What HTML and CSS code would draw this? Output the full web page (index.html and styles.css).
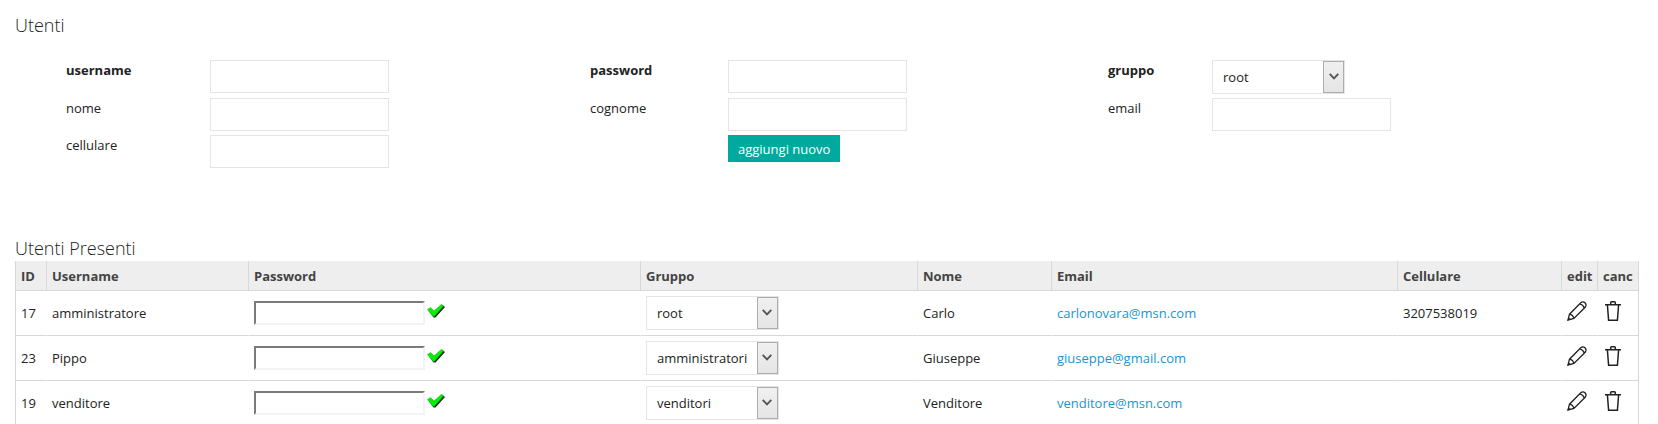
FILE: index.html
```html
<!DOCTYPE html>
<html lang="it">
<head>
<meta charset="utf-8">
<title>Utenti</title>
<link rel="stylesheet" href="styles.css">
</head>
<body>
<svg class="sprite" aria-hidden="true">
  <symbol id="pencil" viewBox="0 0 20 20">
    <path d="M1 19 L2.500 13.200 L14 1.600 Q16 .2 18 1.800 Q19.800 3.800 18.400 6 L6.900 17.400 Z M2.500 13.200 Q6 13.800 6.900 17.400 M12.800 2.800 Q16.400 3.600 17.200 7.200" fill="none" stroke="#222" stroke-width="1.300"/>
    <path d="M.5 19.500 L1.500 16.200 L3.900 18.500 Z" fill="#222"/>
  </symbol>
  <symbol id="trash" viewBox="0 0 16 20">
    <path d="M0 3.700 H16 M5.700 3.700 V1.600 Q5.700 .8 6.500 .8 H9.500 Q10.300 .8 10.300 1.600 V3.700 M2.400 4 L3.600 19.200 H12.400 L13.600 4" fill="none" stroke="#222" stroke-width="1.500"/>
  </symbol>
  <symbol id="check" viewBox="0 0 18 15">
    <path d="M2 7 L5 5.500 L8 8.500 L15.500 1 L18 3 L8.500 13.500 L6.500 13.500 Z" fill="#222"/>
    <path d="M.5 5.500 L3.500 3.500 L7 7 L14.500 .3 L16.500 2 L7.500 12.300 L5.800 12.300 Z" fill="#00f000" stroke="#08b008" stroke-width=".5"/>
  </symbol>
  <symbol id="chevron" viewBox="0 0 10 7">
    <path d="M.7 .8 L5 5.300 L9.300 .8" fill="none" stroke="#555" stroke-width="1.900"/>
  </symbol>
</svg>
<main class="page">
  <h1 class="title">Utenti</h1>
  <form class="user-form">
    <label class="required" for="username">username</label>
    <input class="field" id="username" type="text">
    <label class="required" for="password">password</label>
    <input class="field" id="password" type="password">
    <label class="required" for="gruppo">gruppo</label>
    <span class="picker"><select id="gruppo"><option>root</option><option>amministratori</option><option>venditori</option></select><span class="arrow"><svg><use href="#chevron"/></svg></span></span>
    <label for="nome">nome</label>
    <input class="field" id="nome" type="text">
    <label for="cognome">cognome</label>
    <input class="field" id="cognome" type="text">
    <label for="email">email</label>
    <input class="field" id="email" type="text">
    <label for="cellulare">cellulare</label>
    <input class="field" id="cellulare" type="text">
    <button class="submit" type="button">aggiungi nuovo</button>
  </form>

  <h2 class="title">Utenti Presenti</h2>
  <table class="users">
    <colgroup>
      <col class="c-id"><col class="c-username"><col class="c-password"><col class="c-gruppo"><col class="c-nome"><col class="c-email"><col class="c-cell"><col class="c-edit"><col class="c-canc">
    </colgroup>
    <thead>
      <tr><th>ID</th><th>Username</th><th>Password</th><th>Gruppo</th><th>Nome</th><th>Email</th><th>Cellulare</th><th>edit</th><th>canc</th></tr>
    </thead>
    <tbody>
      <tr>
        <td>17</td><td>amministratore</td>
        <td><div class="pass"><input type="password" aria-label="Password amministratore"><button type="button" class="icon" aria-label="Conferma"><svg class="check"><use href="#check"/></svg></button></div></td>
        <td><span class="picker"><select aria-label="Gruppo amministratore"><option selected>root</option><option>amministratori</option><option>venditori</option></select><span class="arrow"><svg><use href="#chevron"/></svg></span></span></td>
        <td>Carlo</td><td><a href="mailto:carlonovara@msn.com">carlonovara@msn.com</a></td><td>3207538019</td>
        <td><button type="button" class="icon" aria-label="edit"><svg class="pencil"><use href="#pencil"/></svg></button></td>
        <td><button type="button" class="icon bin" aria-label="canc"><svg class="trash"><use href="#trash"/></svg></button></td>
      </tr>
      <tr>
        <td>23</td><td>Pippo</td>
        <td><div class="pass"><input type="password" aria-label="Password Pippo"><button type="button" class="icon" aria-label="Conferma"><svg class="check"><use href="#check"/></svg></button></div></td>
        <td><span class="picker"><select aria-label="Gruppo Pippo"><option>root</option><option selected>amministratori</option><option>venditori</option></select><span class="arrow"><svg><use href="#chevron"/></svg></span></span></td>
        <td>Giuseppe</td><td><a href="mailto:giuseppe@gmail.com">giuseppe@gmail.com</a></td><td></td>
        <td><button type="button" class="icon" aria-label="edit"><svg class="pencil"><use href="#pencil"/></svg></button></td>
        <td><button type="button" class="icon bin" aria-label="canc"><svg class="trash"><use href="#trash"/></svg></button></td>
      </tr>
      <tr>
        <td>19</td><td>venditore</td>
        <td><div class="pass"><input type="password" aria-label="Password venditore"><button type="button" class="icon" aria-label="Conferma"><svg class="check"><use href="#check"/></svg></button></div></td>
        <td><span class="picker"><select aria-label="Gruppo venditore"><option>root</option><option>amministratori</option><option selected>venditori</option></select><span class="arrow"><svg><use href="#chevron"/></svg></span></span></td>
        <td>Venditore</td><td><a href="mailto:venditore@msn.com">venditore@msn.com</a></td><td></td>
        <td><button type="button" class="icon" aria-label="edit"><svg class="pencil"><use href="#pencil"/></svg></button></td>
        <td><button type="button" class="icon bin" aria-label="canc"><svg class="trash"><use href="#trash"/></svg></button></td>
      </tr>
    </tbody>
  </table>
</main>
</body>
</html>
```
FILE: styles.css
```css
* { box-sizing: border-box; }
body {
  margin: 0;
  background: #fff;
  color: #222;
  font: 13px/20px "Open Sans", sans-serif;
}
input, select, button { font: inherit; color: inherit; margin: 0; }
svg { display: block; }
.sprite { display: none; }
.page { padding: 12px 19px 0 15px; }
.title {
  margin: 0;
  font-size: 18px;
  line-height: 26px;
  font-weight: 300;
}

/* new user form */
.user-form {
  display: grid;
  grid-template-columns: 144fr 380fr 138fr 380fr 104fr 427fr;
  gap: 4px 0;
  align-items: start;
  padding: 22px 0 67px 51px;
}
.required { font-weight: 700; }
.field {
  width: 179px;
  height: 33px;
  padding: 0 10px;
  border: 1px solid #e5e5e5;
  background: #fff;
}
.submit {
  grid-column: 4;
  justify-self: start;
  padding: 4px 10px 3px;
  border: 0;
  background: #00a99d;
  color: #fff;
}

/* drop-down with a framed arrow */
.picker { display: grid; width: 133px; height: 34px; }
.picker select {
  grid-area: 1 / 1;
  appearance: none;
  padding: 0 22px 0 10px;
  border: 1px solid #e5e5e5;
  border-radius: 0;
  background: #fff;
}
.arrow {
  grid-area: 1 / 1;
  justify-self: end;
  display: grid;
  place-items: center;
  width: 21px;
  margin: 1px;
  padding-bottom: 2px;
  border: 1px solid #adadad;
  background: linear-gradient(#f0f0f0, #e5e5e5);
  pointer-events: none;
}
.arrow svg { width: 10px; height: 7px; }

/* users table */
.users {
  width: 100%;
  table-layout: fixed;
  border-collapse: separate;
  border-spacing: 0;
}
.c-id { width: 31px; }
.c-username { width: 12.44%; }
.c-password { width: 24.14%; }
.c-gruppo { width: 17.06%; }
.c-nome { width: 8.25%; }
.c-email { width: 21.31%; }
.c-cell { width: 10.1%; }
.c-edit { width: 36px; }
.c-canc { width: 42px; }
.users th, .users td {
  padding: 5px 0 5px 5px;
  text-align: left;
  border-left: 1px solid transparent;
  border-bottom: 1px solid #d8d8d8;
}
.users th {
  padding: 5px 0 4px 5px;
  background: #eee;
  color: #444;
  border-left-color: #d8d8d8;
}
.users td:first-child { border-left-color: #d8d8d8; }
.users th:last-child, .users td:last-child { border-right: 1px solid #d8d8d8; }
.users a { color: #1a94d2; text-decoration: none; }
.pass { display: flex; align-items: center; gap: 2px; }
.pass input {
  width: 171px;
  height: 24px;
  padding: 0 4px;
  border: 2px solid;
  border-color: #7b7b7b #f3f3f3 #f3f3f3 #7b7b7b;
  background: #fff;
}
.icon { display: block; padding: 0 0 4px; border: 0; background: none; }
.bin { padding-left: 2px; }
.check { width: 18px; height: 15px; }
.pencil { width: 20px; height: 20px; }
.trash { width: 16px; height: 20px; }
```
